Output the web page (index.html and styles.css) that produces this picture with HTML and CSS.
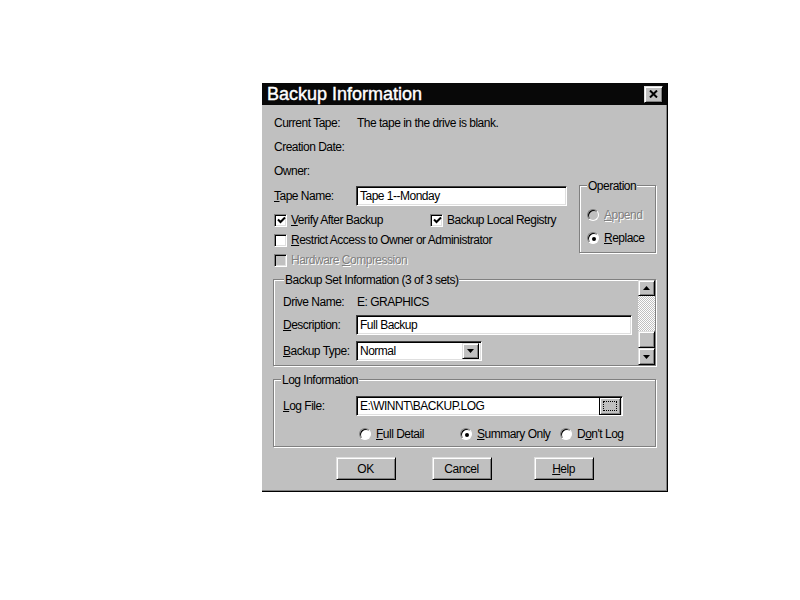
FILE: index.html
```html
<!DOCTYPE html>
<html lang="en">
<head>
    <meta charset="UTF-8">
    <title>Backup Information</title>
    <link rel="stylesheet" href="styles.css">
</head>
<body>
    <div class="dialog">
        <div class="titlebar">
            <span class="title">Backup Information</span>
            <span class="close-btn raised">
                <svg width="9" height="8" viewBox="0 0 9 8"><path d="M1 0.5 L8 7.5 M8 0.5 L1 7.5" stroke="#000" stroke-width="2"/></svg>
            </span>
        </div>
        <div class="content">
            <div class="info-row"><span class="info-label">Current Tape:</span><span>The tape in the drive is blank.</span></div>
            <div class="info-row"><span class="info-label">Creation Date:</span></div>
            <div class="info-row"><span class="info-label">Owner:</span></div>

            <div class="mid">
                <div class="mid-left">
                    <div class="tape-row">
                        <label class="tape-label"><u>T</u>ape Name:</label>
                        <div class="textbox tape-box">Tape 1--Monday</div>
                    </div>
                    <div class="check-line first">
                        <span class="check-item">
                            <span class="checkbox"><svg width="9" height="9" viewBox="0 0 9 9"><path d="M1 3.5 L3.5 6 L8 1.5" fill="none" stroke="#000" stroke-width="2"/></svg></span>
                            <span><u>V</u>erify After Backup</span>
                        </span>
                        <span class="check-item">
                            <span class="checkbox"><svg width="9" height="9" viewBox="0 0 9 9"><path d="M1 3.5 L3.5 6 L8 1.5" fill="none" stroke="#000" stroke-width="2"/></svg></span>
                            <span>Backup Local Registry</span>
                        </span>
                    </div>
                    <div class="check-line">
                        <span class="checkbox"></span>
                        <span><u>R</u>estrict Access to Owner or Administrator</span>
                    </div>
                    <div class="check-line disabled">
                        <span class="checkbox"></span>
                        <span>Hardware <u>C</u>ompression</span>
                    </div>
                </div>
                <div class="group operation">
                    <span class="legend">Operation</span>
                    <div class="radio-line append disabled"><span class="radio"></span><span><u>A</u>ppend</span></div>
                    <div class="radio-line replace"><span class="radio on"><span class="dot"></span></span><span><u>R</u>eplace</span></div>
                </div>
            </div>

            <div class="group set-info">
                <div class="group-main">
                    <span class="legend">Backup Set Information (3 of 3 sets)</span>
                    <div class="set-row drive-row">
                        <span class="set-label">Drive Name:</span>
                        <span class="drive-value">E: GRAPHICS</span>
                    </div>
                    <div class="set-row desc-row">
                        <span class="set-label"><u>D</u>escription:</span>
                        <div class="textbox desc-box">Full Backup</div>
                    </div>
                    <div class="set-row type-row">
                        <span class="set-label"><u>B</u>ackup Type:</span>
                        <div class="textbox combo">
                            <span class="combo-text">Normal</span>
                            <span class="combo-btn raised">
                                <svg width="7" height="4" viewBox="0 0 7 4"><path d="M0 0 H7 L3.5 4 Z" fill="#000"/></svg>
                            </span>
                        </div>
                    </div>
                </div>
                <div class="scrollbar">
                    <span class="scroll-btn raised up">
                        <svg width="7" height="4" viewBox="0 0 7 4"><path d="M0 4 H7 L3.5 0 Z" fill="#000"/></svg>
                    </span>
                    <span class="scroll-track"><span class="scroll-thumb raised"></span></span>
                    <span class="scroll-btn raised">
                        <svg width="7" height="4" viewBox="0 0 7 4"><path d="M0 0 H7 L3.5 4 Z" fill="#000"/></svg>
                    </span>
                </div>
            </div>

            <div class="group log-info">
                <span class="legend">Log Information</span>
                <div class="log-row">
                    <span class="set-label"><u>L</u>og File:</span>
                    <div class="textbox log-box">
                        <span class="log-text">E:\WINNT\BACKUP.LOG</span>
                        <span class="browse-btn"><span class="focus-rect"></span></span>
                    </div>
                </div>
                <div class="log-radios">
                    <span class="radio-line full"><span class="radio"></span><span><u>F</u>ull Detail</span></span>
                    <span class="radio-line summary"><span class="radio on"><span class="dot"></span></span><span><u>S</u>ummary Only</span></span>
                    <span class="radio-line"><span class="radio"></span><span>D<u>o</u>n't Log</span></span>
                </div>
            </div>

            <div class="buttons">
                <button class="raised push">OK</button>
                <button class="raised push">Cancel</button>
                <button class="raised push help"><u>H</u>elp</button>
            </div>
        </div>
    </div>
</body>
</html>
```

FILE: styles.css
```css
body {
    margin: 0;
    background-color: #fff;
    font-family: "Liberation Sans", Arial, sans-serif;
    font-size: 12px;
    letter-spacing: -0.5px;
    color: #000;
}
u {
    text-underline-offset: 1px;
}
.dialog {
    width: 406px;
    margin: 83px 0 0 262px;
    box-sizing: border-box;
    background-color: #c0c0c0;
    border-right: 1px solid #000;
    border-bottom: 1px solid #000;
    box-shadow: inset -1px -1px 0 #808080;
}
.titlebar {
    height: 22px;
    background-color: #080808;
    display: flex;
    align-items: center;
    justify-content: space-between;
    padding: 0 4px 0 5px;
}
.title {
    color: #fff;
    font-size: 18px;
    letter-spacing: 0;
    line-height: 22px;
    -webkit-text-stroke: 0.4px #fff;
}
.raised {
    box-sizing: border-box;
    background-color: #c0c0c0;
    border: 1px solid;
    border-color: #dfdfdf #000 #000 #dfdfdf;
    box-shadow: inset 1px 1px 0 #fff, inset -1px -1px 0 #808080;
}
.close-btn {
    width: 19px;
    height: 17px;
    display: flex;
    align-items: center;
    justify-content: center;
}
.content {
    padding: 6px 11px 11px 11px;
}
.info-row {
    display: flex;
    align-items: center;
    height: 24px;
    padding-left: 1px;
}
.info-label {
    width: 83px;
}

/* top block: tape name, checkboxes, operation */
.mid {
    display: flex;
    justify-content: space-between;
    align-items: flex-start;
}
.mid-left {
    padding-left: 1px;
}
.tape-row {
    display: flex;
    align-items: center;
    height: 26px;
}
.tape-label {
    width: 82px;
}
.textbox {
    box-sizing: border-box;
    height: 20px;
    background-color: #fff;
    border: 1px solid;
    border-color: #404040 #fff #fff #404040;
    box-shadow: inset 1px 1px 0 #000, inset -1px -1px 0 #dfdfdf;
    padding-left: 3px;
    line-height: 18px;
}
.tape-box {
    width: 211px;
}
.check-line {
    display: flex;
    align-items: center;
    height: 20px;
}
.check-line.first {
    margin-top: 1px;
}
.check-item {
    display: flex;
    align-items: center;
}
.check-item:first-child {
    width: 156px;
}
.checkbox {
    box-sizing: border-box;
    width: 13px;
    height: 13px;
    margin-right: 4px;
    background-color: #fff;
    border: 1px solid;
    border-color: #808080 #fff #fff #808080;
    box-shadow: inset 1px 1px 0 #000, inset -1px -1px 0 #dfdfdf;
    display: flex;
    align-items: center;
    justify-content: center;
    padding: 1px 0 0 1px;
}
.disabled {
    color: #808080;
    text-shadow: 1px 1px 0 #fff;
}
.disabled .checkbox,
.disabled .radio {
    background-color: #c0c0c0;
}

/* group boxes */
.group {
    box-sizing: border-box;
    border: 1px solid #808080;
    box-shadow: inset 1px 1px 0 #fff, 1px 1px 0 #fff;
}
.legend {
    display: block;
    width: fit-content;
    margin-top: -7px;
    padding: 0 1px;
    line-height: 14px;
    background-color: #c0c0c0;
}
.operation {
    flex-shrink: 0;
    width: 77px;
    height: 68px;
    margin-top: 2px;
    padding-left: 7px;
}
.radio-line {
    display: flex;
    align-items: center;
    height: 20px;
}
.append {
    margin-top: 12px;
}
.replace {
    margin-top: 3px;
}
.radio {
    box-sizing: border-box;
    width: 12px;
    height: 12px;
    margin-right: 5px;
    border-radius: 50%;
    background-color: #fff;
    border: 1px solid;
    border-color: #808080 #fff #fff #808080;
    box-shadow: inset 1px 1px 0 #000;
    display: flex;
    align-items: center;
    justify-content: center;
}
.dot {
    width: 4px;
    height: 4px;
    border-radius: 50%;
    background-color: #000;
    margin: 1px 0 0 1px;
}

.set-info {
    display: flex;
    margin-top: 9px;
}
.group-main {
    flex: 1;
    padding: 0 0 2px 9px;
}
.set-info .legend {
    margin-left: 1px;
}
.set-row, .log-row {
    display: flex;
    align-items: center;
}
.set-label {
    width: 73px;
}
.drive-row {
    height: 22px;
    margin-top: 4px;
}
.drive-value {
    padding-left: 1px;
}
.desc-row {
    height: 24px;
}
.desc-box {
    width: 276px;
}
.type-row {
    height: 24px;
    margin-top: 2px;
}
.combo {
    width: 126px;
    display: flex;
    align-items: center;
    justify-content: space-between;
    padding: 2px 2px 2px 3px;
}
.combo-btn {
    width: 17px;
    height: 16px;
    display: flex;
    align-items: center;
    justify-content: center;
}
.scrollbar {
    width: 17px;
    margin-left: 6px;
    display: flex;
    flex-direction: column;
}
.scroll-btn {
    height: 17px;
    display: flex;
    align-items: center;
    justify-content: center;
}
.scroll-btn.up {
    height: 16px;
}
.scroll-track {
    flex: 1;
    display: flex;
    flex-direction: column;
    justify-content: flex-end;
    background: repeating-conic-gradient(#fff 0 25%, #c0c0c0 0 50%) 0 0 / 2px 2px;
}
.scroll-thumb {
    height: 17px;
}

.log-info {
    margin-top: 13px;
    padding: 0 0 2px 9px;
}
.log-info .legend {
    margin-left: -2px;
}
.log-row {
    height: 22px;
    margin-top: 8px;
}
.log-box {
    width: 267px;
    display: flex;
    align-items: center;
    justify-content: space-between;
    padding: 0 1px 0 3px;
}
.browse-btn {
    box-sizing: border-box;
    width: 22px;
    height: 18px;
    border: 1px solid #000;
    background-color: #c0c0c0;
    box-shadow: inset 1px 1px 0 #fff, inset -1px -1px 0 #808080;
    padding: 3px;
}
.focus-rect {
    display: block;
    height: 100%;
    border: 1px dotted #000;
    box-sizing: border-box;
}
.log-radios {
    display: flex;
    height: 20px;
    margin-top: 7px;
    padding-left: 76px;
}
.full {
    width: 101px;
}
.summary {
    width: 100px;
}

.buttons {
    display: flex;
    justify-content: center;
    gap: 36px;
    margin-top: 10px;
}
.push {
    width: 60px;
    height: 23px;
    font-family: inherit;
    font-size: 12px;
    letter-spacing: -0.5px;
    color: #000;
    padding: 0;
}
.push.help {
    margin-left: 6px;
}
```
